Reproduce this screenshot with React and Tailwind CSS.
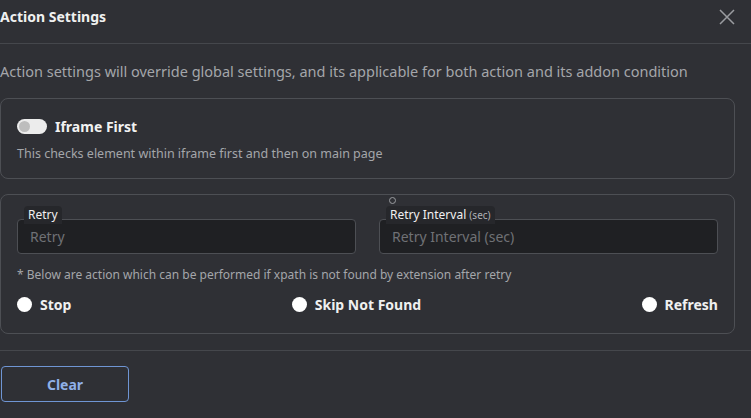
export default function App() {
  return (
    <div className="w-[751px] h-[418px] bg-[#2f3035] text-white overflow-hidden font-['Noto_Sans',sans-serif]">
      <div className="h-[44px] flex items-center justify-between pr-[16px] border-b border-[#45474c]">
        <div className="text-[14px] font-bold text-[#f0f0f0] -mt-[10px]">Action Settings</div>
        <svg width="16" height="16" viewBox="0 0 16 16" className="-mt-[10px]" stroke="#9a9ca0" strokeWidth="1.5" fill="none">
          <path d="M1 1 L15 15 M15 1 L1 15" />
        </svg>
      </div>
      <div className="pr-[16px]">
        <div className="mt-[17px] text-[14.5px] text-[#a4a6aa] leading-[20px]">
          Action settings will override global settings, and its applicable for both action and its addon condition
        </div>
        <div className="mt-[17px] border border-[#4d4f54] rounded-[8px] h-[81px] px-[16px] pt-[17px]">
          <div className="flex items-center gap-[8px]">
            <div className="w-[30px] h-[15px] rounded-full bg-[#ececec] flex items-center px-[2px]">
              <div className="w-[11px] h-[11px] rounded-full bg-[#bdbdbd]" />
            </div>
            <div className="text-[14px] font-bold text-[#f2f2f2]">Iframe First</div>
          </div>
          <div className="mt-[8px] text-[12.5px] text-[#a4a6aa]">This checks element within iframe first and then on main page</div>
        </div>
        <div className="mt-[15px] border border-[#4d4f54] rounded-[8px] h-[140px] px-[16px] pt-[24px]">
          <div className="grid grid-cols-2 gap-[23px]">
            <div className="relative">
              <div className="absolute left-[7px] -top-[13px] bg-[#26272b] rounded-t-[4px] px-[4px] h-[18px] text-[12px] text-[#f0f0f0] leading-[18px]">Retry</div>
              <div className="h-[35px] bg-[#1f2023] border border-[#4d4f54] rounded-[4px] flex items-center px-[12px] text-[14px] text-[#6f7175]">Retry</div>
            </div>
            <div className="relative">
              <div className="absolute left-[10px] -top-[22px] w-[7px] h-[7px] rounded-full border border-[#9a9ca0]" />
              <div className="absolute left-[7px] -top-[13px] bg-[#26272b] rounded-t-[4px] px-[4px] h-[18px] text-[12px] text-[#f0f0f0] leading-[18px]">
                Retry Interval <span className="text-[10px] text-[#b0b2b6]">(sec)</span>
              </div>
              <div className="h-[35px] bg-[#1f2023] border border-[#4d4f54] rounded-[4px] flex items-center px-[12px] text-[14px] text-[#6f7175]">Retry Interval (sec)</div>
            </div>
          </div>
          <div className="mt-[12px] text-[12px] text-[#a4a6aa]">* Below are action which can be performed if xpath is not found by extension after retry</div>
          <div className="mt-[10px] flex items-center justify-between">
            <div className="flex items-center gap-[8px]">
              <div className="w-[15px] h-[15px] rounded-full bg-white" />
              <div className="text-[14px] font-bold text-[#f0f0f0]">Stop</div>
            </div>
            <div className="flex items-center gap-[8px]">
              <div className="w-[15px] h-[15px] rounded-full bg-white" />
              <div className="text-[14px] font-bold text-[#f0f0f0]">Skip Not Found</div>
            </div>
            <div className="flex items-center gap-[8px]">
              <div className="w-[15px] h-[15px] rounded-full bg-white" />
              <div className="text-[14px] font-bold text-[#f0f0f0]">Refresh</div>
            </div>
          </div>
        </div>
      </div>
      <div className="mt-[16px] border-t border-[#45474c] pt-[15px]">
        <button className="ml-[1px] w-[128px] h-[36px] border border-[#6f95d4] rounded-[4px] text-[14px] font-bold text-[#8fb0e8]">Clear</button>
      </div>
    </div>
  );
}
